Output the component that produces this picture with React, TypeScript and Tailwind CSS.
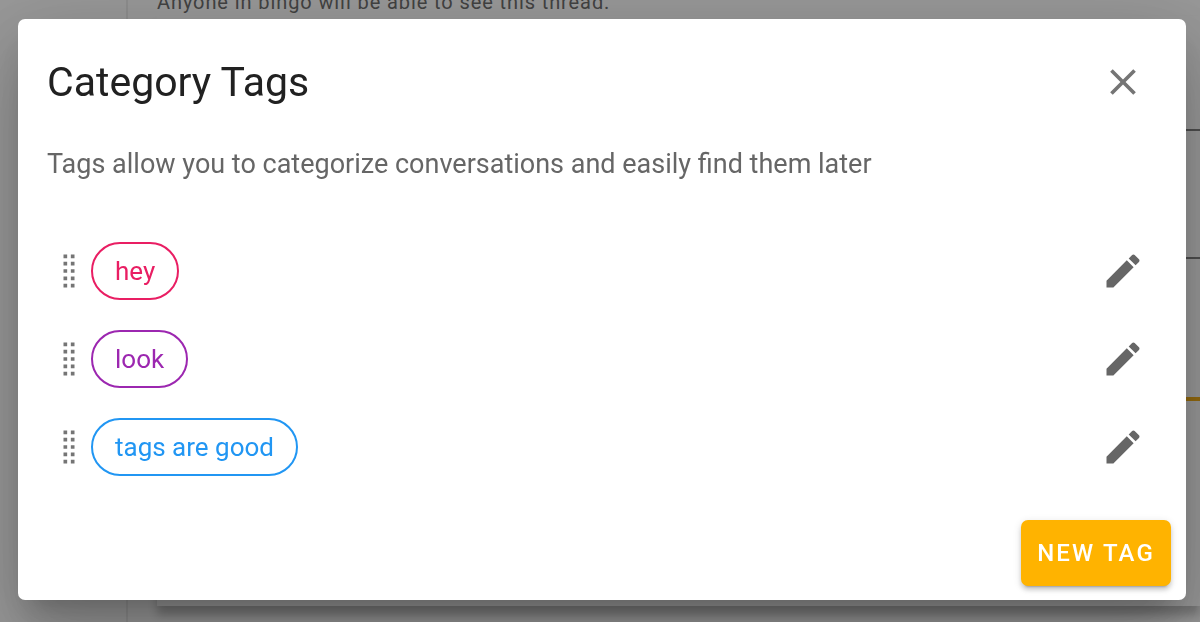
import React from "react";

type Tag = { name: string; style: string };

const tags: Tag[] = [
  { name: "hey", style: "border-[#e91e63] text-[#e91e63]" },
  { name: "look", style: "border-[#9c27b0] text-[#9c27b0]" },
  { name: "tags are good", style: "border-[#2196f3] text-[#2196f3]" },
];

function DragIcon() {
  return (
    <svg viewBox="0 0 24 24" className="size-11 shrink-0 cursor-move fill-[#757575]" aria-hidden="true">
      {[3, 7, 11, 15, 19].map((y) => (
        <path key={y} d={`M9 ${y}h2v2H9zM13 ${y}h2v2h-2z`} />
      ))}
    </svg>
  );
}

function PencilIcon() {
  return (
    <svg viewBox="0 0 24 24" className="size-11 fill-[#666666]" aria-hidden="true">
      <path d="M20.71 7.04c.39-.39.39-1.04 0-1.41l-2.34-2.34c-.37-.39-1.02-.39-1.41 0l-1.84 1.83 3.75 3.75M3 17.25V21h3.75L17.81 9.93l-3.75-3.75L3 17.25z" />
    </svg>
  );
}

function CloseIcon() {
  return (
    <svg viewBox="0 0 24 24" className="size-11 fill-[#757575]" aria-hidden="true">
      <path d="M19 6.41 17.59 5 12 10.59 6.41 5 5 6.41 10.59 12 5 17.59 6.41 19 12 13.41 17.59 19 19 17.59 13.41 12 19 6.41z" />
    </svg>
  );
}

function ThreadPage() {
  return (
    <div className="flex h-screen overflow-hidden bg-white" aria-hidden="true">
      <div className="w-32 shrink-0 border-r-2 border-[#ececec]" />
      <div className="flex grow flex-col pl-[29px]">
        <p className="-mt-3 text-xl leading-7 tracking-[0.045em] text-[#616161]">
          Anyone in bingo will be able to see this thread.
        </p>
        <div className="flex grow flex-col bg-white shadow-[0_9px_9px_rgba(0,0,0,0.25)]">
          <div className="h-[115px] border-b-2 border-[#767676]" />
          <div className="h-32 border-b-2 border-[#767676]" />
          <div className="h-[142px] border-b-4 border-[#f5a800]" />
        </div>
        <div className="h-4 shrink-0" />
      </div>
    </div>
  );
}

export default function App() {
  return (
    <div className="font-[Roboto,sans-serif]">
      <ThreadPage />
      <div className="fixed inset-0 bg-[#212121]/46 pt-[19px] pr-[14px] pl-[18px]">
        <section
          role="dialog"
          aria-modal="true"
          aria-labelledby="dialog-title"
          className="rounded-[7px] bg-white shadow-[0_20px_27px_-13px_rgba(0,0,0,0.2),0_44px_69px_5px_rgba(0,0,0,0.14),0_16px_84px_15px_rgba(0,0,0,0.12)]"
        >
          <header className="flex items-center justify-between pt-8 pr-[41px] pl-[29px]">
            <h2 id="dialog-title" className="text-[41px] leading-[62px] text-[#212121]">
              Category Tags
            </h2>
            <button type="button" aria-label="Close">
              <CloseIcon />
            </button>
          </header>
          <p className="px-[29px] pt-[31px] text-[27px] leading-10 text-[#666666]">
            Tags allow you to categorize conversations and easily find them later
          </p>
          <ul className="flex flex-col gap-[30px] pt-[58px] pr-[41px] pl-[29px]">
            {tags.map((tag) => (
              <li key={tag.name} className="flex h-[58px] items-center">
                <DragIcon />
                <span
                  className={`flex h-[58px] items-center rounded-full border-2 px-[22px] text-[26px] leading-9 ${tag.style}`}
                >
                  {tag.name}
                </span>
                <button type="button" aria-label={`Edit ${tag.name}`} className="ml-auto">
                  <PencilIcon />
                </button>
              </li>
            ))}
          </ul>
          <footer className="flex justify-end px-[15px] pt-11 pb-[14px]">
            <button
              type="button"
              className="h-[66px] rounded-[7px] bg-[#ffb300] px-4 text-2xl font-medium tracking-[0.09em] text-white shadow-[0_5px_2px_-4px_rgba(0,0,0,0.2),0_4px_4px_rgba(0,0,0,0.14),0_2px_9px_rgba(0,0,0,0.12)]"
            >
              NEW TAG
            </button>
          </footer>
        </section>
      </div>
    </div>
  );
}
